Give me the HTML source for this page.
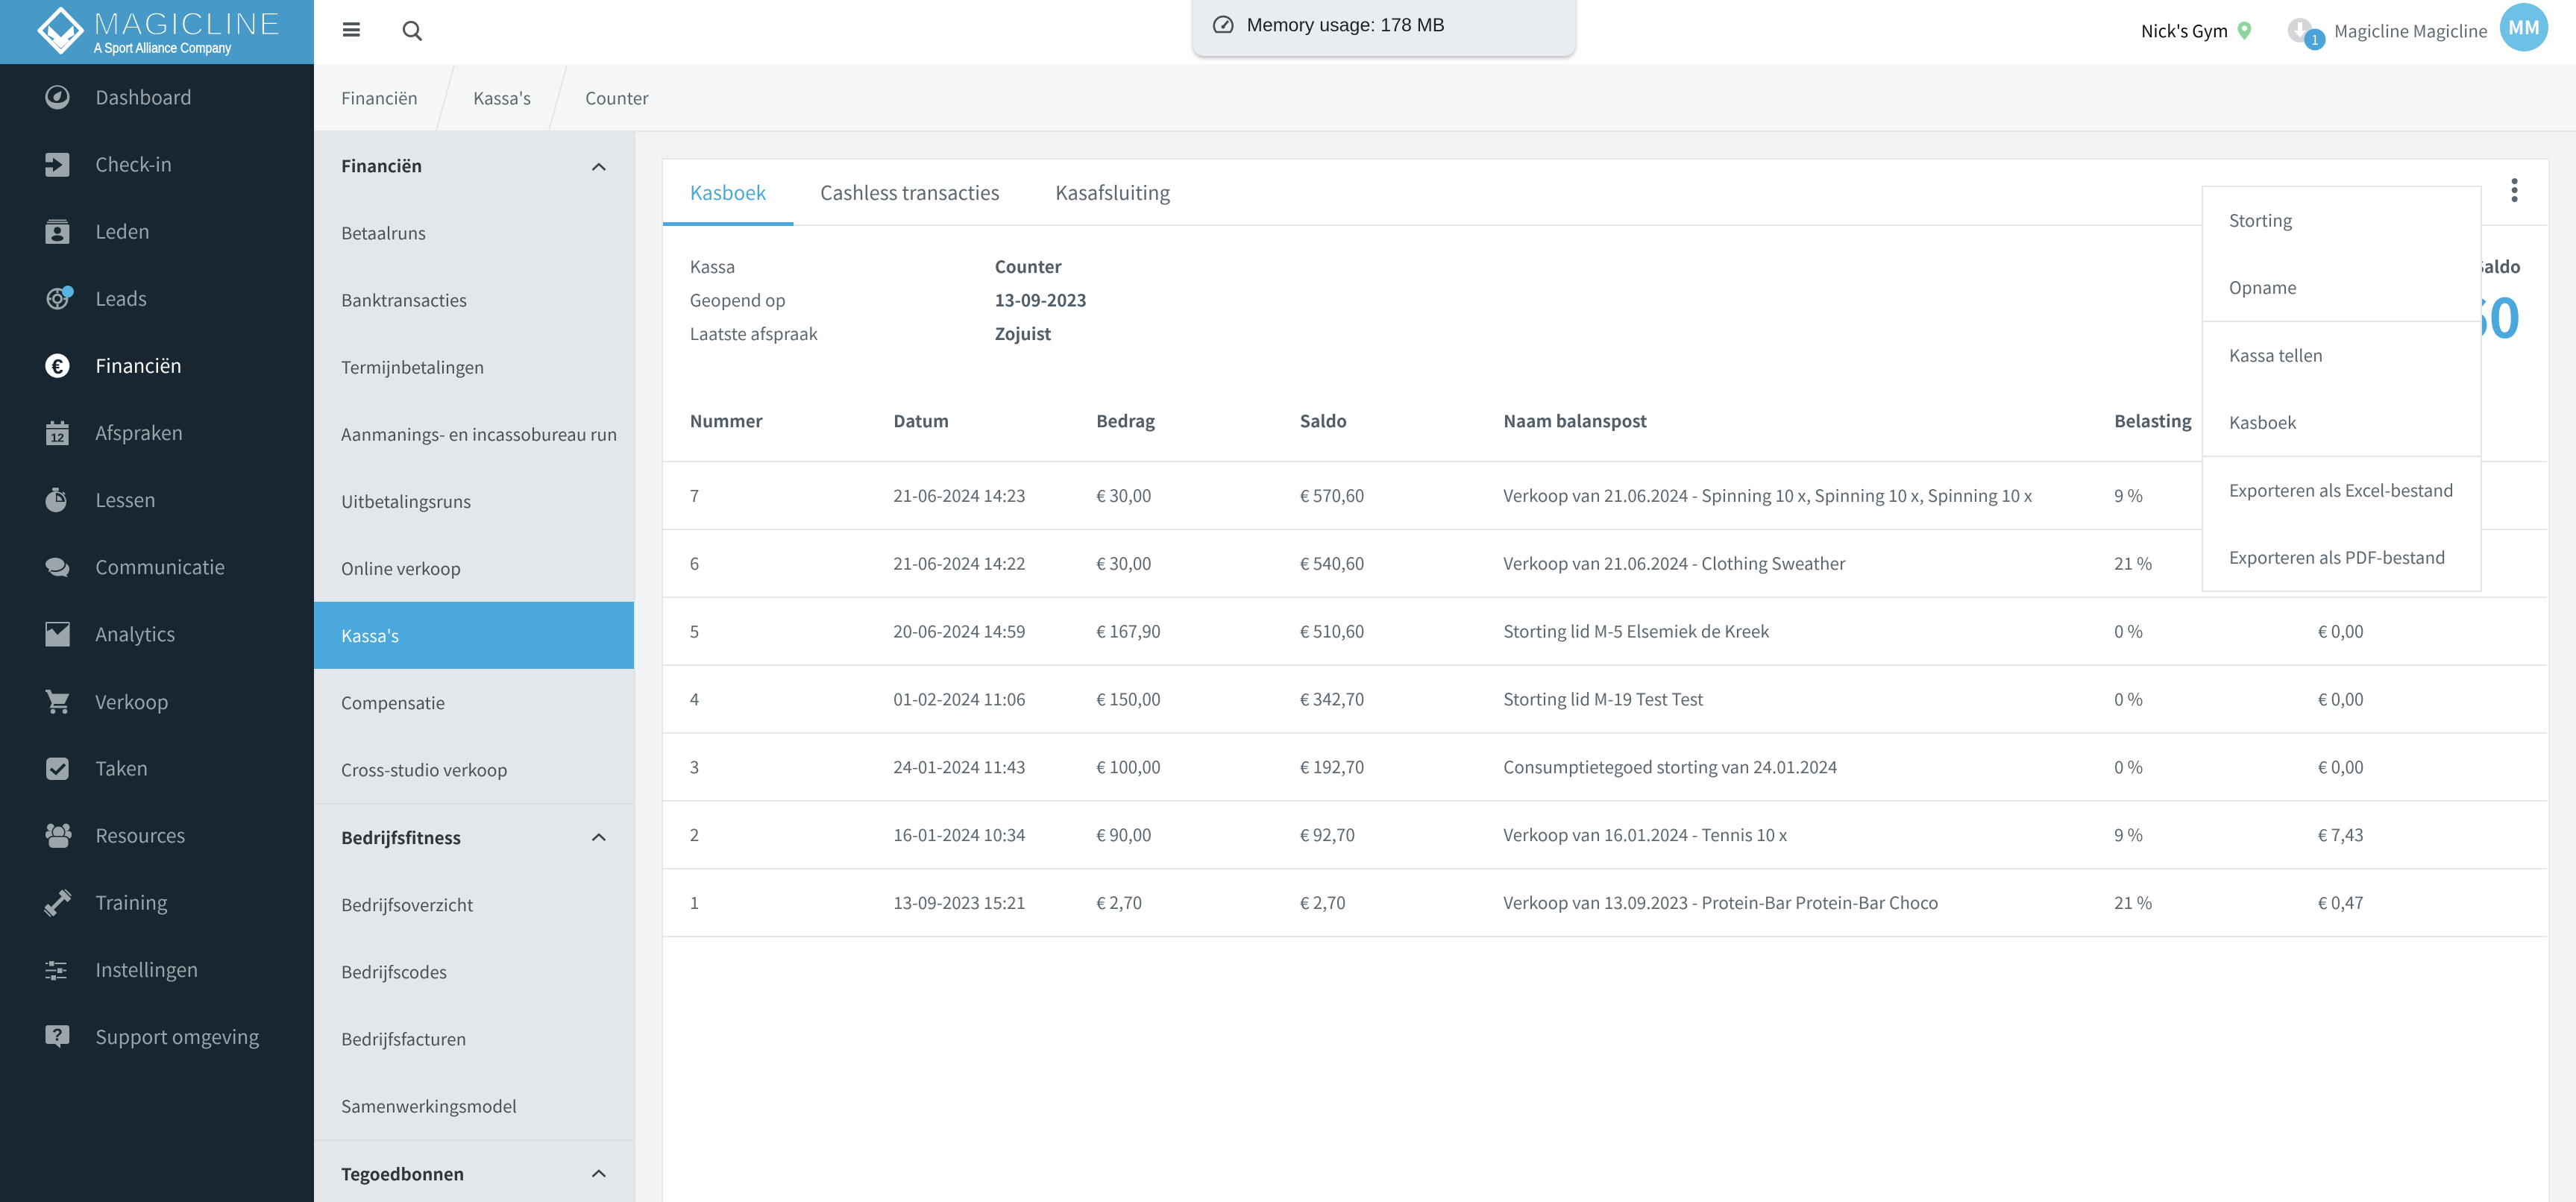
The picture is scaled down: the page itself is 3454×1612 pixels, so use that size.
<!DOCTYPE html>
<html lang="nl"><head><meta charset="utf-8"><title>Magicline - Kassa's</title>
<style>
html,body{margin:0;padding:0;width:3454px;height:1612px;overflow:hidden;background:#f1f3f5}
body{position:relative;font-family:"Noto Sans CJK JP","Liberation Sans",sans-serif;font-size:22.55px;color:#5c6871}
.b{position:absolute}
.t{position:absolute;white-space:nowrap;line-height:40px;margin-top:-20px}
.s{font-size:25.4px;color:#9aa3a8;left:128px}
.m{color:#4a5258;left:457.5px}
.h{font-weight:700;color:#30373c;left:457.5px}
.th{font-weight:700;color:#535f68}
.d{left:2989px;color:#5c6871}
svg{position:absolute;left:0;top:0}
</style></head><body>
<div class="b" style="left:421px;top:0;width:3033px;height:86px;background:#fff"></div>
<div class="b" style="left:421px;top:86px;width:3033px;height:89px;background:#f5f7f7;border-bottom:2px solid #e3e6e8"></div>
<div class="b" style="left:421px;top:177px;width:429px;height:1435px;background:#e4e7ea;border-right:2px solid #dfe3e6"></div>
<div class="b" style="left:421px;top:807px;width:429px;height:90px;background:#4aa8dc"></div>
<div class="b" style="left:421px;top:1077px;width:429px;height:2px;background:#d9dde0"></div>
<div class="b" style="left:421px;top:1528px;width:429px;height:2px;background:#d9dde0"></div>
<div class="b" style="left:0;top:0;width:421px;height:1612px;background:#172630"></div>
<div class="b" style="left:0;top:0;width:421px;height:86px;background:#4799c7"></div>

<div class="b" style="left:887px;top:212px;width:2528px;height:1400px;background:#fff;border:2px solid #e4e8ea;border-bottom:0"></div>
<div class="b" style="left:889px;top:301px;width:2526px;height:2px;background:#e6e9eb"></div>
<div class="b" style="left:889px;top:298px;width:175px;height:5px;background:#4aa8dc"></div>
<div class="b" style="left:889px;top:618px;width:2526px;height:2px;background:#e6e9eb"></div>
<div class="b" style="left:889px;top:709px;width:2526px;height:2px;background:#e6e9eb"></div>
<div class="b" style="left:889px;top:800px;width:2526px;height:2px;background:#e6e9eb"></div>
<div class="b" style="left:889px;top:891px;width:2526px;height:2px;background:#e6e9eb"></div>
<div class="b" style="left:889px;top:982px;width:2526px;height:2px;background:#e6e9eb"></div>
<div class="b" style="left:889px;top:1073px;width:2526px;height:2px;background:#e6e9eb"></div>
<div class="b" style="left:889px;top:1164px;width:2526px;height:2px;background:#e6e9eb"></div>
<div class="b" style="left:889px;top:1255px;width:2526px;height:2px;background:#e6e9eb"></div>

<!-- sidebar text -->
<div class="t s" style="top:130px">Dashboard</div>
<div class="t s" style="top:220px">Check-in</div>
<div class="t s" style="top:310px">Leden</div>
<div class="t s" style="top:400px">Leads</div>
<div class="t s" style="top:490px;color:#fff">Financiën</div>
<div class="t s" style="top:580px">Afspraken</div>
<div class="t s" style="top:669.5px">Lessen</div>
<div class="t s" style="top:759.5px">Communicatie</div>
<div class="t s" style="top:850px">Analytics</div>
<div class="t s" style="top:940.5px">Verkoop</div>
<div class="t s" style="top:1030px">Taken</div>
<div class="t s" style="top:1120px">Resources</div>
<div class="t s" style="top:1210px">Training</div>
<div class="t s" style="top:1299.5px">Instellingen</div>
<div class="t s" style="top:1389.5px">Support omgeving</div>

<!-- breadcrumb -->
<div class="t" style="left:457.5px;top:131px">Financiën</div>
<div class="t" style="left:634.5px;top:131px">Kassa's</div>
<div class="t" style="left:785px;top:131px">Counter</div>

<!-- sub sidebar -->
<div class="t h" style="top:222px">Financiën</div>
<div class="t m" style="top:312px">Betaalruns</div>
<div class="t m" style="top:402px">Banktransacties</div>
<div class="t m" style="top:492px">Termijnbetalingen</div>
<div class="t m" style="top:582px">Aanmanings- en incassobureau run</div>
<div class="t m" style="top:672px">Uitbetalingsruns</div>
<div class="t m" style="top:762px">Online verkoop</div>
<div class="t m" style="top:852px;color:#fff">Kassa's</div>
<div class="t m" style="top:942px">Compensatie</div>
<div class="t m" style="top:1032px">Cross-studio verkoop</div>
<div class="t h" style="top:1123px">Bedrijfsfitness</div>
<div class="t m" style="top:1213px">Bedrijfsoverzicht</div>
<div class="t m" style="top:1303px">Bedrijfscodes</div>
<div class="t m" style="top:1393px">Bedrijfsfacturen</div>
<div class="t m" style="top:1483px">Samenwerkingsmodel</div>
<div class="t h" style="top:1574px">Tegoedbonnen</div>

<!-- tabs -->
<div class="t" style="left:925px;top:258px;font-size:25.6px;color:#4aa8dc">Kasboek</div>
<div class="t" style="left:1100px;top:258px;font-size:25.6px">Cashless transacties</div>
<div class="t" style="left:1415px;top:258px;font-size:25.6px">Kasafsluiting</div>

<!-- info -->
<div class="t" style="left:925px;top:357px">Kassa</div>
<div class="t th" style="left:1334px;top:357px">Counter</div>
<div class="t" style="left:925px;top:402px">Geopend op</div>
<div class="t th" style="left:1334px;top:402px">13-09-2023</div>
<div class="t" style="left:925px;top:447px">Laatste afspraak</div>
<div class="t th" style="left:1334px;top:447px">Zojuist</div>
<div class="t th" style="right:74px;top:357px">Saldo</div>
<div class="t" style="right:74px;top:422px;font-size:72px;font-weight:700;color:#4aa8dc;line-height:100px;margin-top:-50px">€ 570,60</div>

<!-- table head -->
<div class="t th" style="left:925px;top:564px">Nummer</div>
<div class="t th" style="left:1198px;top:564px">Datum</div>
<div class="t th" style="left:1470px;top:564px">Bedrag</div>
<div class="t th" style="left:1743px;top:564px">Saldo</div>
<div class="t th" style="left:2016px;top:564px">Naam balanspost</div>
<div class="t th" style="left:2835px;top:564px">Belasting</div>

<!-- rows -->
<div class="t" style="left:925px;top:664px">7</div><div class="t" style="left:1198px;top:664px">21-06-2024 14:23</div><div class="t" style="left:1470px;top:664px">€ 30,00</div><div class="t" style="left:1743px;top:664px">€ 570,60</div><div class="t" style="left:2016px;top:664px">Verkoop van 21.06.2024 - Spinning 10 x, Spinning 10 x, Spinning 10 x</div><div class="t" style="left:2835px;top:664px">9 %</div>
<div class="t" style="left:925px;top:755px">6</div><div class="t" style="left:1198px;top:755px">21-06-2024 14:22</div><div class="t" style="left:1470px;top:755px">€ 30,00</div><div class="t" style="left:1743px;top:755px">€ 540,60</div><div class="t" style="left:2016px;top:755px">Verkoop van 21.06.2024 - Clothing Sweather</div><div class="t" style="left:2835px;top:755px">21 %</div>
<div class="t" style="left:925px;top:846px">5</div><div class="t" style="left:1198px;top:846px">20-06-2024 14:59</div><div class="t" style="left:1470px;top:846px">€ 167,90</div><div class="t" style="left:1743px;top:846px">€ 510,60</div><div class="t" style="left:2016px;top:846px">Storting lid M-5 Elsemiek de Kreek</div><div class="t" style="left:2835px;top:846px">0 %</div><div class="t" style="left:3108px;top:846px">€ 0,00</div>
<div class="t" style="left:925px;top:937px">4</div><div class="t" style="left:1198px;top:937px">01-02-2024 11:06</div><div class="t" style="left:1470px;top:937px">€ 150,00</div><div class="t" style="left:1743px;top:937px">€ 342,70</div><div class="t" style="left:2016px;top:937px">Storting lid M-19 Test Test</div><div class="t" style="left:2835px;top:937px">0 %</div><div class="t" style="left:3108px;top:937px">€ 0,00</div>
<div class="t" style="left:925px;top:1028px">3</div><div class="t" style="left:1198px;top:1028px">24-01-2024 11:43</div><div class="t" style="left:1470px;top:1028px">€ 100,00</div><div class="t" style="left:1743px;top:1028px">€ 192,70</div><div class="t" style="left:2016px;top:1028px">Consumptietegoed storting van 24.01.2024</div><div class="t" style="left:2835px;top:1028px">0 %</div><div class="t" style="left:3108px;top:1028px">€ 0,00</div>
<div class="t" style="left:925px;top:1119px">2</div><div class="t" style="left:1198px;top:1119px">16-01-2024 10:34</div><div class="t" style="left:1470px;top:1119px">€ 90,00</div><div class="t" style="left:1743px;top:1119px">€ 92,70</div><div class="t" style="left:2016px;top:1119px">Verkoop van 16.01.2024 - Tennis 10 x</div><div class="t" style="left:2835px;top:1119px">9 %</div><div class="t" style="left:3108px;top:1119px">€ 7,43</div>
<div class="t" style="left:925px;top:1210px">1</div><div class="t" style="left:1198px;top:1210px">13-09-2023 15:21</div><div class="t" style="left:1470px;top:1210px">€ 2,70</div><div class="t" style="left:1743px;top:1210px">€ 2,70</div><div class="t" style="left:2016px;top:1210px">Verkoop van 13.09.2023 - Protein-Bar Protein-Bar Choco</div><div class="t" style="left:2835px;top:1210px">21 %</div><div class="t" style="left:3108px;top:1210px">€ 0,47</div>

<!-- dropdown -->
<div class="b" style="left:2952px;top:249px;width:372px;height:541px;background:#fff;border:2px solid #e3e7ea"></div>
<div class="b" style="left:2954px;top:430px;width:372px;height:2px;background:#e3e7ea"></div>
<div class="b" style="left:2954px;top:611px;width:372px;height:2px;background:#e3e7ea"></div>
<div class="t d" style="top:295px">Storting</div>
<div class="t d" style="top:385px">Opname</div>
<div class="t d" style="top:476px">Kassa tellen</div>
<div class="t d" style="top:566px">Kasboek</div>
<div class="t d" style="top:657px">Exporteren als Excel-bestand</div>
<div class="t d" style="top:747px">Exporteren als PDF-bestand</div>

<!-- memory tooltip -->
<div class="b" style="left:1600px;top:-20px;width:512px;height:95px;background:#e9ecf1;border-radius:14px;box-shadow:0 3px 6px rgba(60,70,80,.35)"></div>
<div class="t" style="left:1672px;top:34px;font-family:'Liberation Sans',sans-serif;font-size:25px;color:#1f2328">Memory usage: 178 MB</div>

<!-- header right -->
<div class="t" style="left:2871px;top:41px;color:#111;font-size:22.7px">Nick's Gym</div>
<div class="t" style="left:3130px;top:41px;color:#5f6b73">Magicline Magicline</div>
<div class="b" style="left:3352px;top:4px;width:65px;height:65px;border-radius:50%;background:#6fc0e6"></div>
<div class="t" style="left:3352px;width:65px;text-align:center;top:36px;color:#fff;font-weight:700;font-size:25px">MM</div>

<svg width="3454" height="1612" viewBox="0 0 3454 1612">
<!-- logo -->
<path d="M81.7 12 L110 41 81.7 70 53 41Z" fill="none" stroke="#fff" stroke-width="5.5" stroke-linejoin="round"/>
<path d="M65 34 L81.7 50 98.3 34 99.5 47 92 51 81.7 60 71.5 51 64 47Z" fill="#fff"/>
<path d="M72 53 L81.7 62 91.5 53" fill="none" stroke="#fff" stroke-width="4"/>
<text x="125" y="46.5" font-family="Liberation Sans" font-size="43" fill="#fff" stroke="#4799c7" stroke-width="2" textLength="251" lengthAdjust="spacing">MAGICLINE</text>
<text x="126" y="70.5" font-family="Liberation Sans" font-size="18" fill="#fff" stroke="#fff" stroke-width=".4" textLength="184" lengthAdjust="spacingAndGlyphs">A Sport Alliance Company</text>

<!-- top bar icons -->
<g fill="#50575d"><rect x="460" y="30" width="22.5" height="4" rx="1"/><rect x="460" y="38" width="22.5" height="4" rx="1"/><rect x="460" y="45" width="22.5" height="4" rx="1"/></g>
<circle cx="551" cy="39" r="9.5" fill="none" stroke="#50575d" stroke-width="3"/><path d="M557 46l7 7" stroke="#50575d" stroke-width="3.5" stroke-linecap="round"/>
<!-- breadcrumb slashes -->
<path d="M585 175L609 88M736 175L760 88" stroke="#e2e6e9" stroke-width="2" fill="none"/>
<!-- chevrons -->
<g fill="none" stroke="#3a4146" stroke-width="2.6"><path d="M794.5 228l8.5-8 8.5 8"/><path d="M794.5 1127l8.5-8 8.5 8"/><path d="M794.5 1578l8.5-8 8.5 8"/></g>
<!-- kebab -->
<g fill="#5a6670"><circle cx="3371.7" cy="243" r="4"/><circle cx="3371.7" cy="255" r="4"/><circle cx="3371.7" cy="267" r="4"/></g>
<!-- memory gauge -->
<path d="M1631 43 A12.5 12.5 0 1 1 1649.5 43 Z" fill="none" stroke="#474d52" stroke-width="2.6" stroke-linejoin="round"/>
<path d="M1640 36l6-7" stroke="#474d52" stroke-width="3" stroke-linecap="round"/><circle cx="1640" cy="36" r="2.5" fill="#474d52"/>
<!-- pin -->
<path d="M3009.5 29a9 9 0 0 0-9.2 9.2c0 5.5 5.5 10.5 9.2 15.8 3.7-5.3 9.2-10.3 9.2-15.8a9 9 0 0 0-9.2-9.2z" fill="#8fd5a0"/><circle cx="3009.5" cy="38" r="3.6" fill="#fff"/>
<!-- notification -->
<circle cx="3084" cy="40.5" r="16.5" fill="#d4d6da"/><path d="M3081 30h6v11h5l-8 9-8-9h5z" fill="#fff"/>
<circle cx="3104" cy="53" r="14.5" fill="#4aa3d9"/>
<text x="3104" y="60" font-family="Noto Sans CJK JP" font-size="18" fill="#fff" text-anchor="middle">1</text>

<!-- sidebar icons -->
<g fill="#9ca5a9">
<!-- dashboard -->
<circle cx="77" cy="130.5" r="16.3"/>
<path d="M64.6 133A13 13 0 1 1 89.4 133C87 135 85 138 77 138C69 138 67 135 64.6 133Z" fill="#172630"/>
<path d="M82.5 122C82 127 81 135 76 135.5a4.7 4.7 0 0 1-4-6.5C73 126 78 124 82.5 122Z"/>
<!-- check-in -->
<rect x="61" y="205" width="32" height="32" rx="3"/>
<path d="M61 217.5h10v-6l13 9.5-13 9.5v-6h-10z" fill="#172630"/>
<!-- leden -->
<rect x="61" y="301" width="32" height="26" rx="2"/>
<rect x="63" y="297.5" width="28" height="1.8"/><rect x="65" y="294.5" width="24" height="1.8"/>
<circle cx="77" cy="309" r="4.8" fill="#172630"/><ellipse cx="77" cy="319.5" rx="8" ry="4" fill="#172630"/>
<!-- leads -->
<g fill="none" stroke="#9ca5a9"><circle cx="77" cy="400.7" r="13" stroke-width="3"/><circle cx="77" cy="400.7" r="5.5" stroke-width="3"/><path d="M77 387v6M77 408v6.5M63 400.7h6M85 400.7h6" stroke-width="3"/></g>
<circle cx="91" cy="391" r="8" fill="#58b3e3"/>
<!-- finance -->
<circle cx="77" cy="490.5" r="16.3" fill="#fff"/>
<text x="77" y="501" font-family="Liberation Sans" font-weight="700" font-size="28" fill="#172630" text-anchor="middle">€</text>
<!-- afspraken -->
<rect x="62" y="569" width="30" height="28" rx="1"/>
<rect x="68" y="564.5" width="4.5" height="6" rx="1"/><rect x="81.5" y="564.5" width="4.5" height="6" rx="1"/>
<rect x="62" y="574" width="30" height="1.6" fill="#172630"/>
<text x="77" y="592.5" font-family="Liberation Sans" font-weight="700" font-size="16" fill="#172630" text-anchor="middle">12</text>
<!-- lessen -->
<circle cx="75" cy="673" r="14"/><rect x="70" y="654" width="9" height="4.5" rx="2"/>
<path d="M75 673V661A12 12 0 0 1 87 673Z" fill="#172630"/><path d="M76.5 671.5V664.5A8.5 8.5 0 0 1 83.5 671.5Z"/><path d="M84 660l3 3" stroke="#9ca5a9" stroke-width="2"/>
<!-- communicatie -->
<path d="M76 752c10 0 17 5 17 11 0 4-2 7-4 8l2 3-8-2c-9 2-15-2-16-6z"/>
<ellipse cx="74" cy="756.5" rx="14.5" ry="10.5" fill="#172630"/>
<path d="M74 748c7 0 12.500 4 12.500 8.500S81 765 74 765c-1.500 0-3 0-4.500-.5l-5 3 1.500-4.500C62.500 761.500 61 759 61 756.500 61 752 67 748 74 748z"/>
<!-- analytics -->
<rect x="61" y="834" width="32.500" height="33" rx="1"/>
<path d="M63 836H92V838L77 851.500 70 843 63 846.500Z" fill="#172630"/>
<!-- verkoop -->
<path d="M61 925h6.500l2.500 5.500H93l-6.500 13.500H72.500l-1 2.500H90v3H66.500l3-6.500-6.500-15H61z"/>
<circle cx="71" cy="954" r="3.300"/><circle cx="87" cy="954" r="3.300"/>
<!-- taken -->
<rect x="62" y="1016" width="30" height="30" rx="6"/>
<path d="M68 1031l7 6 12-12" fill="none" stroke="#172630" stroke-width="4"/>
<!-- resources -->
<circle cx="68" cy="1109.500" r="5"/><circle cx="88.500" cy="1109.500" r="5"/>
<rect x="61" y="1114.500" width="15" height="10" rx="4"/><rect x="81" y="1114.500" width="15" height="10" rx="4"/>
<circle cx="78.500" cy="1116" r="9" fill="#172630"/><circle cx="78.500" cy="1116" r="7.500"/>
<rect x="64" y="1121" width="29" height="17" rx="6" fill="#172630"/><rect x="65.500" y="1122.500" width="26" height="14.500" rx="5"/>
<!-- training -->
<g transform="translate(77.500 1211) rotate(-45)"><rect x="-10" y="-2.500" width="20" height="5"/><rect x="-17" y="-8.500" width="7" height="17" rx="1"/><rect x="10" y="-8.500" width="7" height="17" rx="1"/><rect x="-20.500" y="-6" width="2" height="12"/><rect x="18.500" y="-6" width="2" height="12"/></g>
<!-- instellingen -->
<rect x="61" y="1291" width="28" height="2"/><rect x="61" y="1300.500" width="28" height="2"/><rect x="61" y="1310" width="28" height="2"/>
<rect x="65.500" y="1288.500" width="7" height="7" fill="#172630" stroke="#172630" stroke-width="2"/><rect x="66" y="1289" width="6.500" height="6.500"/>
<rect x="76.500" y="1298" width="7" height="7" fill="#172630" stroke="#172630" stroke-width="2"/><rect x="77" y="1298.500" width="6.500" height="6.500"/>
<rect x="68" y="1307.500" width="7" height="7" fill="#172630" stroke="#172630" stroke-width="2"/><rect x="68.500" y="1308" width="6.500" height="6.500"/>
<!-- support -->
<path d="M64 1375h26a3 3 0 0 1 3 3v19a3 3 0 0 1-3 3h-9v6l-7-6H64a3 3 0 0 1-3-3v-19a3 3 0 0 1 3-3z"/>
<text x="77" y="1395.500" font-family="Liberation Sans" font-weight="700" font-size="23" fill="#172630" text-anchor="middle">?</text>
</g>
</svg>
</body></html>
